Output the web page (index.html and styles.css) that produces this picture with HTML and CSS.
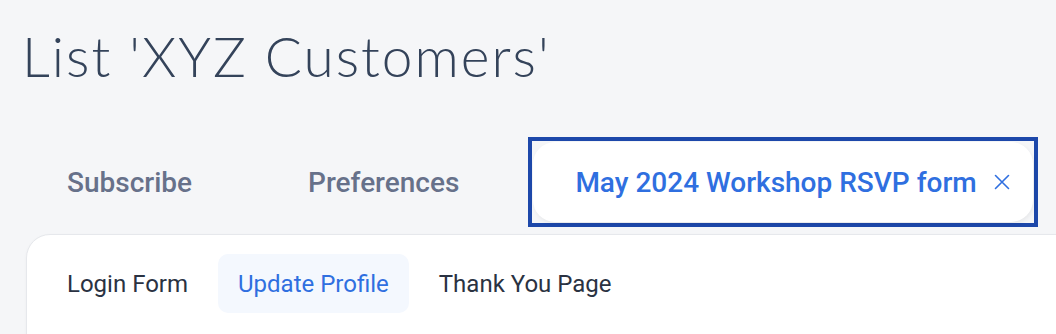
FILE: index.html
```html
<!DOCTYPE html>
<html lang="en">
<head>
  <meta charset="UTF-8">
  <title>List 'XYZ Customers'</title>
  <link rel="stylesheet" href="styles.css">
</head>
<body>

  <h1 class="page-title">List 'XYZ Customers'</h1>

  <div class="form-tabs">
    <div class="form-tab">Subscribe</div>
    <div class="form-tab">Preferences</div>
    <div class="focus-ring">
      <div class="form-tab active">
        <span>May 2024 Workshop RSVP form</span>
        <svg class="close-icon" width="16" height="16" viewBox="0 0 16 16">
          <path d="M1.5 1.5 L14.5 14.5 M14.5 1.5 L1.5 14.5" stroke="currentColor" stroke-width="1.6" stroke-linecap="round"/>
        </svg>
      </div>
    </div>
  </div>

  <div class="card">
    <div class="page-tabs">
      <div class="page-tab">Login Form</div>
      <div class="page-tab selected">Update Profile</div>
      <div class="page-tab">Thank You Page</div>
    </div>
  </div>

</body>
</html>
```

FILE: styles.css
```css
* {
  box-sizing: border-box;
}
body {
  margin: 0;
  background: #f5f6f8;
  font-family: Roboto, 'Noto Sans', sans-serif;
  overflow: hidden;
}
.page-title {
  margin: 23px 0 0 22px;
  font-family: Lato, sans-serif;
  font-weight: 300;
  font-size: 55px;
  line-height: 1.2;
  color: #34435a;
  letter-spacing: 2px;
}
.form-tabs {
  display: flex;
  align-items: center;
  gap: 32px;
  margin: 53px 0 0 25px;
}
.form-tab {
  display: flex;
  align-items: center;
  height: 80px;
  padding: 0 42px;
  font-size: 28px;
  font-weight: 500;
  color: #67718a;
}
.focus-ring {
  margin: -5px;
  padding: 1px;
  border: 4px solid #1d48aa;
}
.form-tab.active {
  background: #fff;
  color: #2f6fe0;
  border-radius: 22px;
  padding-right: 23px;
  box-shadow: 1px 2px 4px rgba(0,0,0,0.06);
}
.close-icon {
  margin-left: 17px;
}
.card {
  margin: 12px -60px 0 26px;
  height: 200px;
  background: #fff;
  border: 1px solid #e6e8ec;
  border-radius: 24px 24px 0 0;
  padding: 19px 20px;
  box-shadow: 0 1px 3px rgba(0,0,0,0.04);
}
.page-tabs {
  display: flex;
  gap: 10px;
}
.page-tab {
  height: 59px;
  padding: 0 20px;
  display: flex;
  align-items: center;
  font-size: 24px;
  color: #2a3242;
  border-radius: 10px;
}
.page-tab.selected {
  background: #f4f8fe;
  color: #2f6fe0;
}
```
